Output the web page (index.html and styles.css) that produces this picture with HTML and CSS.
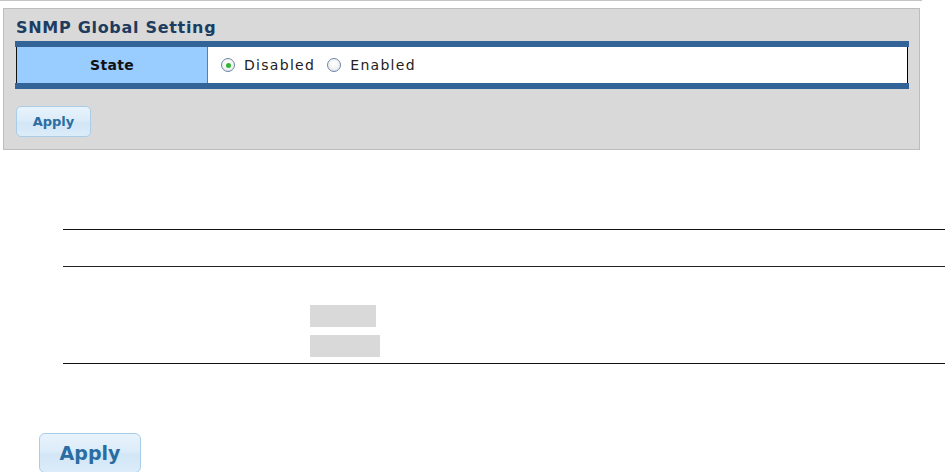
FILE: index.html
```html
<!DOCTYPE html>
<html>
<head>
<meta charset="utf-8">
<link rel="stylesheet" href="styles.css">
</head>
<body>
<div class="topline"></div>
<div class="panel">
  <div class="title">SNMP Global Setting</div>
  <div class="tbl">
    <div class="row">
      <div class="th">State</div>
      <div class="td">
        <label class="opt"><span class="radio checked"></span>Disabled</label>
        <label class="opt"><span class="radio"></span>Enabled</label>
      </div>
    </div>
  </div>
  <button class="btn">Apply</button>
</div>
<div class="grid">
  <div class="grow1"></div>
  <div class="grow2">
    <div class="gbox g1"></div>
    <div class="gbox g2"></div>
  </div>
</div>
<button class="btn big">Apply</button>
</body>
</html>
```
FILE: styles.css
```css
html { overflow: hidden; }
body {
  margin: 0;
  font-family: "DejaVu Sans", Verdana, sans-serif;
  background: #fff;
}
.topline {
  width: 922px;
  height: 1px;
  background: #c4c4c4;
}
.panel {
  box-sizing: border-box;
  margin: 7px 0 0 3px;
  width: 917px;
  height: 142px;
  border: 1px solid #bdbdbd;
  background: #d9d9d9;
  padding: 9px 0 0 11px;
}
.title {
  font-weight: bold;
  font-size: 16px;
  line-height: 20px;
  letter-spacing: 0.7px;
  color: #1d3c60;
  padding-left: 1px;
}
.tbl {
  margin-top: 3px;
  width: 894px;
  box-sizing: border-box;
  border-top: 6px solid #326497;
  border-bottom: 6px solid #326497;
}
.row {
  display: flex;
  height: 36px;
  margin: 0 1px;
  border-left: 1px solid #111;
  border-right: 1px solid #000;
}
.th {
  width: 190px;
  background: #99ccff;
  border-right: 1px solid #5a7fa6;
  font-weight: bold;
  font-size: 14px;
  letter-spacing: 0.3px;
  color: #111;
  display: flex;
  align-items: center;
  justify-content: center;
}
.td {
  flex: 1;
  background: #fff;
  display: flex;
  align-items: center;
  padding-left: 13px;
  font-size: 14px;
  letter-spacing: 1.3px;
  color: #222;
}
.opt {
  display: flex;
  align-items: center;
  margin-right: 12px;
}
.radio {
  box-sizing: border-box;
  width: 14px;
  height: 14px;
  border-radius: 50%;
  border: 1px solid #6d87a5;
  background: radial-gradient(circle at 50% 40%, #ffffff 0%, #f2f2f2 55%, #d0d5da 100%);
  margin-right: 9px;
  display: flex;
  align-items: center;
  justify-content: center;
}
.radio.checked::after {
  content: "";
  width: 5px;
  height: 5px;
  border-radius: 50%;
  background: #2fb52f;
}
.btn {
  display: block;
  margin-top: 17px;
  margin-left: 1px;
  width: 75px;
  height: 31px;
  border: 1px solid #a9cde9;
  border-radius: 5px;
  background: linear-gradient(#e8f3fc 0%, #dcecf9 45%, #d2e6f6 55%, #dcecf9 100%);
  font-family: "DejaVu Sans", Verdana, sans-serif;
  font-weight: bold;
  font-size: 13px;
  color: #2a6da2;
  padding: 0;
}
.grid {
  margin: 79px 0 0 63px;
  width: 882px;
  border-top: 1px solid #111;
  border-bottom: 1px solid #111;
}
.grow1 {
  height: 36px;
  border-bottom: 1px solid #222;
}
.grow2 {
  padding: 38px 0 6px 247px;
  display: flex;
  flex-direction: column;
  gap: 8px;
}
.gbox {
  height: 22px;
  background: #d9d9d9;
}
.g1 { width: 66px; }
.g2 { width: 70px; }
.btn.big {
  margin: 69px 0 0 39px;
  width: 102px;
  height: 40px;
  font-size: 19px;
  border-radius: 6px;
}
```
